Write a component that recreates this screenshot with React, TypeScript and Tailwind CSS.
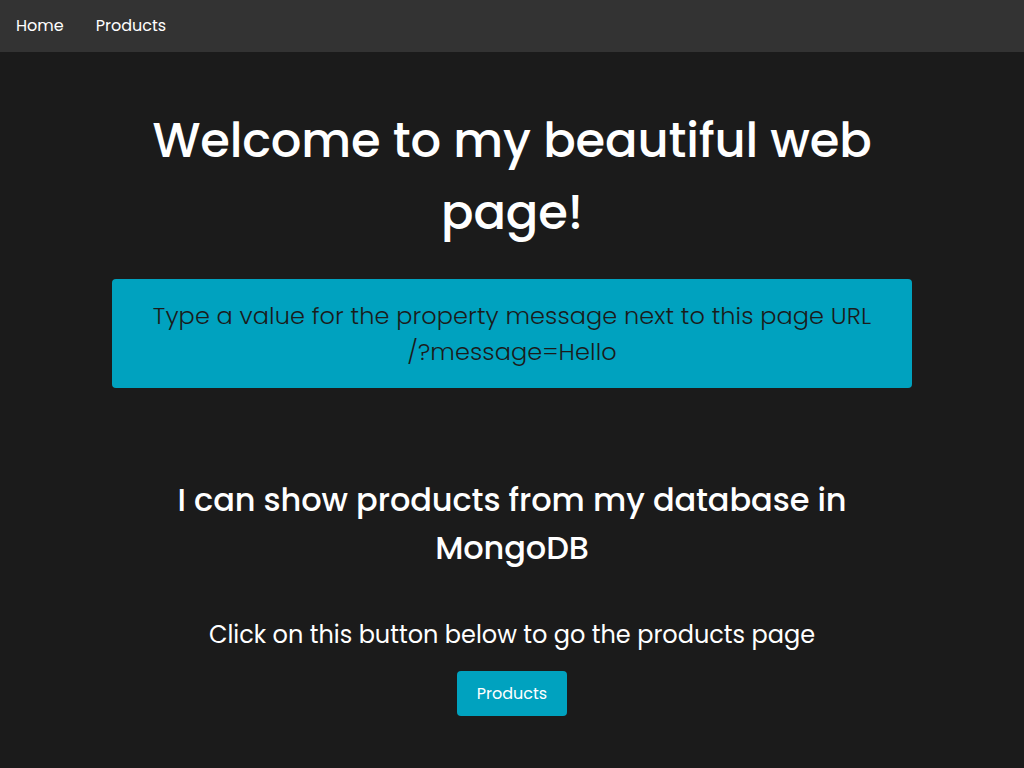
import React from 'react';

const font = { fontFamily: '"Poppins", "DejaVu Sans", "Noto Sans", sans-serif' };

export default function App() {
  return (
    <div className="min-h-screen bg-[#1b1b1b] text-white" style={font}>
      <nav className="flex h-[52px] items-center bg-[#333333] px-4 text-[16px]">
        <a className="mr-8 text-white">Home</a>
        <a className="text-white">Products</a>
      </nav>

      <main className="mx-auto w-[800px] text-center">
        <h1 className="mx-auto mt-[53px] w-[740px] text-[48px] font-medium leading-[72px] tracking-[-0.15px]">
          Welcome to my beautiful web page!
        </h1>

        <div className="mt-[30px] rounded bg-[#00a2bf] px-[36px] pb-[18px] pt-[19px] text-[24px] font-light leading-[36px] tracking-[0.1px] text-[#1b1b1b]">
          Type a value for the property message next to this page URL /?message=Hello
        </div>

        <h2 className="mx-auto mt-[88px] w-[700px] text-[32px] font-medium leading-[48px] tracking-[-0.1px]">
          I can show products from my database in MongoDB
        </h2>

        <p className="mt-[45px] text-[24px] leading-[36px]">
          Click on this button below to go the products page
        </p>

        <button className="mt-[18px] h-[45px] w-[110px] rounded bg-[#00a2bf] text-[16px] text-white">
          Products
        </button>
      </main>
    </div>
  );
}
